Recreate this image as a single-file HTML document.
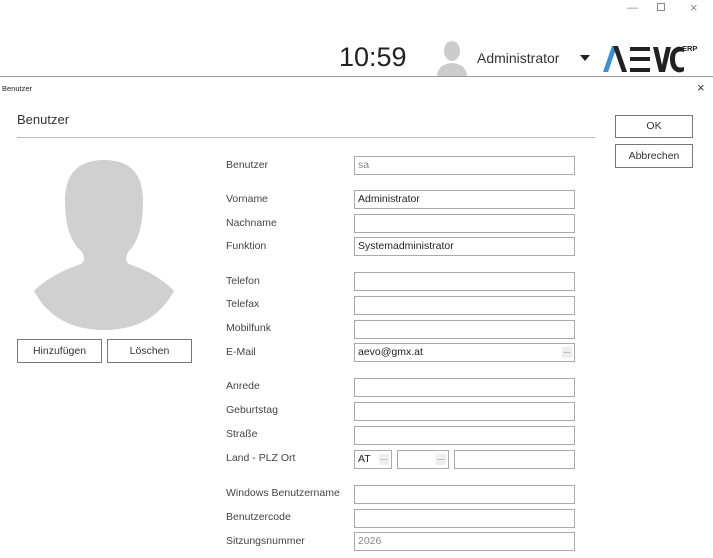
<!DOCTYPE html>
<html><head><meta charset="utf-8"><style>
*{margin:0;padding:0;box-sizing:border-box}
body{width:713px;height:558px;background:#fff;font-family:"Liberation Sans",sans-serif;color:#333;position:relative;overflow:hidden}
.a{position:absolute}
.l{position:absolute;left:226px;font-size:10.5px;color:#444}
.i{position:absolute;left:354px;width:221px;height:19px;border:1px solid #aaa;background:#fff;font-size:10.5px;padding:2px 3px;color:#222}
.btn{position:absolute;border:1px solid #777;background:#fff;font-size:10.5px;text-align:center;color:#333}
.dd{position:absolute;right:2px;top:3px;width:10px;height:11px;background:#eee;font-size:8px;line-height:8px;text-align:center;color:#555}
</style></head><body>
<div class="a" style="left:627px;top:2px;font-size:11px;color:#888">—</div>
<div class="a" style="left:657px;top:3px;width:8px;height:8px;border:1px solid #888"></div>
<div class="a" style="left:690px;top:0px;font-size:13px;color:#888">×</div>
<div class="a" style="left:339px;top:42px;font-size:27px;color:#222">10:59</div>
<svg class="a" style="left:436px;top:40px" width="32" height="36" viewBox="0 0 32 36"><ellipse cx="16" cy="11" rx="8" ry="10" fill="#ccc"/><path d="M1 36 Q2 24 16 23 Q30 24 31 36Z" fill="#ccc"/></svg>
<div class="a" style="left:477px;top:50px;font-size:14px;color:#333">Administrator</div>
<div class="a" style="left:580px;top:55px;width:0;height:0;border-left:5px solid transparent;border-right:5px solid transparent;border-top:6px solid #222"></div>
<svg class="a" style="left:600px;top:40px" width="113" height="34" viewBox="0 0 113 34">
<path d="M3 32 L12 6 L17 6 L8 32Z" fill="#3a8fd9"/><path d="M13 6 L18 6 L27 32 L22 32Z" fill="#222"/>
<rect x="30" y="7" width="20" height="4" fill="#222"/><rect x="30" y="17" width="20" height="4" fill="#222"/><rect x="30" y="28" width="20" height="4" fill="#222"/>
<path d="M53 7 L58 7 L62 25 L66 7 L71 7 L65 32 L59 32Z" fill="#222"/>
<path d="M84 8 Q80 6 77 7 Q70 10 70 19 Q70 29 77 32 Q81 33 84 31 L84 27 Q81 28 78 27 Q75 25 75 19 Q75 13 78 12 Q81 11 84 12Z" fill="#222"/>
<text x="82" y="11" font-family="Liberation Sans" font-weight="bold" font-size="7.5" fill="#222">ERP</text></svg>
<div class="a" style="left:0;top:76px;width:713px;height:1px;background:#999"></div>
<div class="a" style="left:2px;top:84px;font-size:7.5px;color:#222">Benutzer</div>
<div class="a" style="left:697px;top:80px;font-size:13px;color:#333">×</div>
<div class="a" style="left:17px;top:112px;font-size:13px;color:#333">Benutzer</div>
<div class="a" style="left:17px;top:137px;width:578px;height:1px;background:#bbb"></div>
<div class="btn" style="left:615px;top:115px;width:78px;height:23px;line-height:21px">OK</div>
<div class="btn" style="left:615px;top:144px;width:78px;height:24px;line-height:22px">Abbrechen</div>
<svg class="a" style="left:33px;top:159px" width="142" height="172" viewBox="0 0 142 172"><path d="M71 1 Q110 1 110 42 Q110 78 96 92 Q90 100 96 105 Q125 115 141 132 Q120 171 71 171 Q22 171 1 132 Q18 115 48 105 Q54 100 48 92 Q32 78 32 42 Q32 1 71 1Z" fill="#d0d0d0"/></svg>
<div class="btn" style="left:17px;top:339px;width:85px;height:24px;line-height:22px">Hinzufügen</div>
<div class="btn" style="left:107px;top:339px;width:85px;height:24px;line-height:22px">Löschen</div>

<div class="l" style="top:159px">Benutzer</div><div class="i" style="top:156px;color:#888">sa</div>
<div class="l" style="top:193px">Vorname</div><div class="i" style="top:190px">Administrator</div>
<div class="l" style="top:217px">Nachname</div><div class="i" style="top:214px"></div>
<div class="l" style="top:240px">Funktion</div><div class="i" style="top:237px">Systemadministrator</div>
<div class="l" style="top:275px">Telefon</div><div class="i" style="top:272px"></div>
<div class="l" style="top:298px">Telefax</div><div class="i" style="top:296px"></div>
<div class="l" style="top:322px">Mobilfunk</div><div class="i" style="top:320px"></div>
<div class="l" style="top:346px">E-Mail</div><div class="i" style="top:343px">aevo@gmx.at<span class="dd">...</span></div>
<div class="l" style="top:380px">Anrede</div><div class="i" style="top:378px"></div>
<div class="l" style="top:404px">Geburtstag</div><div class="i" style="top:402px"></div>
<div class="l" style="top:428px">Straße</div><div class="i" style="top:426px"></div>
<div class="l" style="top:452px">Land - PLZ Ort</div>
<div class="i" style="top:450px;width:38px">AT<span class="dd">...</span></div>
<div class="i" style="top:450px;left:397px;width:52px"><span class="dd">...</span></div>
<div class="i" style="top:450px;left:454px;width:121px"></div>
<div class="l" style="top:487px">Windows Benutzername</div><div class="i" style="top:485px"></div>
<div class="l" style="top:511px">Benutzercode</div><div class="i" style="top:509px"></div>
<div class="l" style="top:535px">Sitzungsnummer</div><div class="i" style="top:532px;color:#888">2026</div>
</body></html>
